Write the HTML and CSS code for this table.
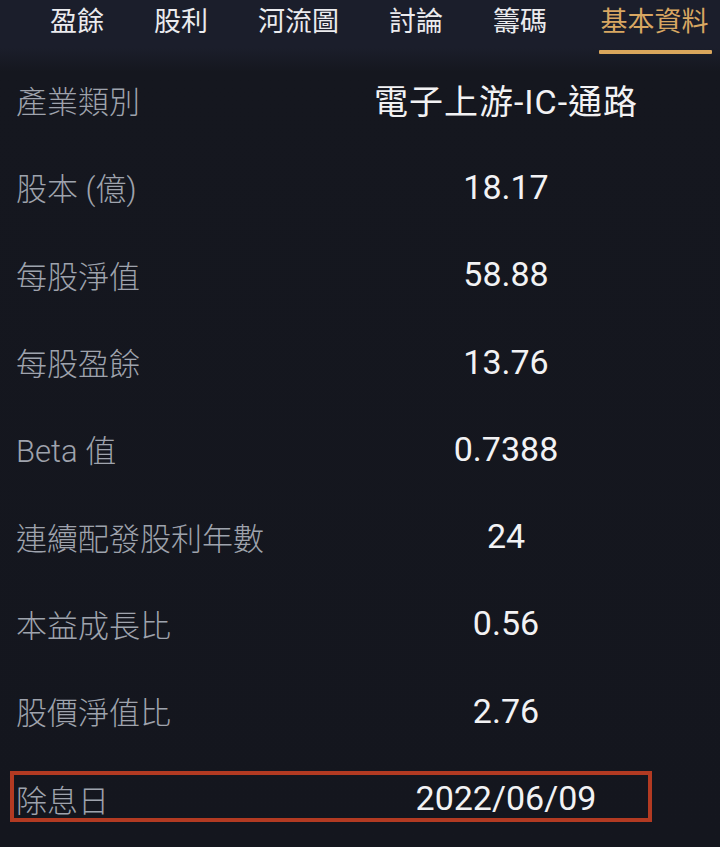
FILE: index.html
```html
<!DOCTYPE html>
<html lang="zh-Hant">
<head>
<meta charset="utf-8">
<title>基本資料</title>
<link rel="stylesheet" href="styles.css">
</head>
<body>
<div class="page">
  <nav class="tabs">
    <div class="tab"><span class="tab-text">盈餘</span></div>
    <div class="tab"><span class="tab-text">股利</span></div>
    <div class="tab"><span class="tab-text">河流圖</span></div>
    <div class="tab"><span class="tab-text">討論</span></div>
    <div class="tab"><span class="tab-text">籌碼</span></div>
    <div class="tab active"><span class="tab-text">基本資料</span><span class="tab-bar"></span></div>
  </nav>
  <div class="list">
    <div class="row"><span class="label">產業類別</span><span class="value spaced">電子上游-IC-通路</span></div>
    <div class="row"><span class="label">股本 (億)</span><span class="value">18.17</span></div>
    <div class="row"><span class="label">每股淨值</span><span class="value">58.88</span></div>
    <div class="row"><span class="label">每股盈餘</span><span class="value">13.76</span></div>
    <div class="row"><span class="label">Beta 值</span><span class="value">0.7388</span></div>
    <div class="row"><span class="label">連續配發股利年數</span><span class="value">24</span></div>
    <div class="row"><span class="label">本益成長比</span><span class="value">0.56</span></div>
    <div class="row"><span class="label">股價淨值比</span><span class="value">2.76</span></div>
    <div class="row highlight"><span class="label">除息日</span><span class="value">2022/06/09</span></div>
  </div>
</div>
</body>
</html>
```

FILE: styles.css
```css
html, body {
  margin: 0;
  padding: 0;
}
body {
  width: 720px;
  height: 847px;
  overflow: hidden;
  background: #14161e;
  font-family: Roboto, "Noto Sans CJK TC", sans-serif;
}
.page {
  background: linear-gradient(to bottom, #1b1e2b 0px, #1b1e2b 48px, #15171f 72px, #14161e 100%);
  height: 847px;
}
.tabs {
  display: flex;
  gap: 50px;
  padding-left: 50px;
  height: 56px;
}
.tab {
  display: flex;
  flex-direction: column;
  align-items: center;
}
.tab-text {
  font-family: "Noto Sans CJK TC", sans-serif;
  font-size: 27px;
  line-height: 40px;
  color: #ebebee;
  font-weight: 400;
}
.tab.active .tab-text {
  color: #d8a762;
}
.tab-bar {
  display: block;
  width: 113px;
  height: 4px;
  margin-top: 10px;
  margin-left: 2px;
  background: #d9a65c;
  border-radius: 1px;
}
.list {
  display: flex;
  flex-direction: column;
}
.row {
  position: relative;
  display: flex;
  align-items: center;
  height: 87.3px;
  padding-left: 16px;
}
.label {
  width: 346px;
  font-size: 31px;
  color: #9fa3ad;
  font-weight: 300;
  white-space: nowrap;
}
.value {
  width: 288px;
  text-align: center;
  font-size: 34px;
  color: #f2f2f4;
  white-space: nowrap;
}
.value.spaced {
  letter-spacing: 1px;
}
.highlight::after {
  content: "";
  position: absolute;
  left: 10px;
  top: 17px;
  width: 642px;
  height: 51px;
  box-sizing: border-box;
  border: 4px solid #b23a22;
}
```
